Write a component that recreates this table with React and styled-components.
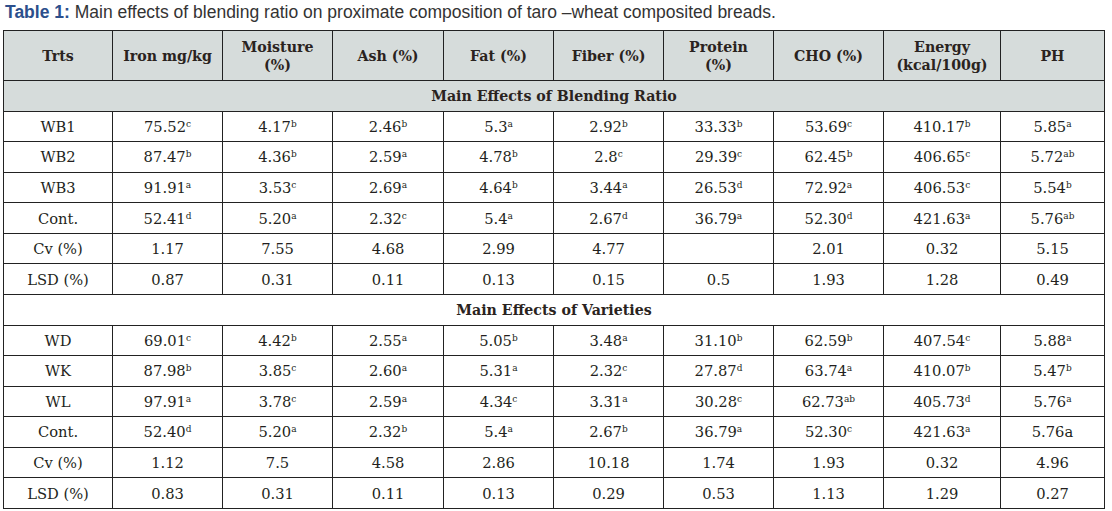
import React from "react";
import styled, { createGlobalStyle } from "styled-components";

const GlobalStyle = createGlobalStyle`
  body {
    margin: 0;
    background: #ffffff;
  }
`;

const Page = styled.div`
  padding: 1px 8px 0 3px;
`;

const Caption = styled.div`
  font-family: "Liberation Sans", Arial, sans-serif;
  font-size: 17.5px;
  color: #333333;
  height: 29px;
  line-height: 22px;
  padding-left: 2px;
`;

const CaptionLabel = styled.b`
  color: #2c4f8c;
`;

const Table = styled.table`
  border-collapse: collapse;
  table-layout: fixed;
  width: 1101px;
  font-family: "DejaVu Serif", "Liberation Serif", serif;
  color: #231f20;
`;

const HeadCell = styled.th`
  background: #d6dcdb;
  border: 1px solid #222222;
  font-size: 14.2px;
  font-weight: bold;
  line-height: 18px;
  height: 49px;
  padding: 0 4px;
  text-align: center;
  color: #2a2320;
`;

const Row = styled.tr`
  height: 30.57px;
`;

const SectionCell = styled.td`
  background: ${(p) => (p.$shaded ? "#d6dcdb" : "#ffffff")};
  border: 1px solid #222222;
  font-size: 14.2px;
  font-weight: bold;
  text-align: center;
  padding: 0;
  color: #2a2320;
`;

const Cell = styled.td`
  border: 1px solid #222222;
  font-size: 14.7px;
  text-align: center;
  padding: 0;
  white-space: nowrap;
`;

const Sup = styled.sup`
  font-size: 9px;
  vertical-align: 5px;
  line-height: 0;
`;

const widths = [109, 110, 110, 111, 110, 110, 110, 110, 117, 104];

const headers = [
  ["Trts"],
  ["Iron mg/kg"],
  ["Moisture", "(%)"],
  ["Ash (%)"],
  ["Fat (%)"],
  ["Fiber (%)"],
  ["Protein", "(%)"],
  ["CHO (%)"],
  ["Energy", "(kcal/100g)"],
  ["PH"],
];

const sections = [
  {
    title: "Main Effects of Blending Ratio",
    shaded: true,
    rows: [
      ["WB1", "75.52^c", "4.17^b", "2.46^b", "5.3^a", "2.92^b", "33.33^b", "53.69^c", "410.17^b", "5.85^a"],
      ["WB2", "87.47^b", "4.36^b", "2.59^a", "4.78^b", "2.8^c", "29.39^c", "62.45^b", "406.65^c", "5.72^ab"],
      ["WB3", "91.91^a", "3.53^c", "2.69^a", "4.64^b", "3.44^a", "26.53^d", "72.92^a", "406.53^c", "5.54^b"],
      ["Cont.", "52.41^d", "5.20^a", "2.32^c", "5.4^a", "2.67^d", "36.79^a", "52.30^d", "421.63^a", "5.76^ab"],
      ["Cv (%)", "1.17", "7.55", "4.68", "2.99", "4.77", "", "2.01", "0.32", "5.15"],
      ["LSD (%)", "0.87", "0.31", "0.11", "0.13", "0.15", "0.5", "1.93", "1.28", "0.49"],
    ],
  },
  {
    title: "Main Effects of Varieties",
    shaded: false,
    rows: [
      ["WD", "69.01^c", "4.42^b", "2.55^a", "5.05^b", "3.48^a", "31.10^b", "62.59^b", "407.54^c", "5.88^a"],
      ["WK", "87.98^b", "3.85^c", "2.60^a", "5.31^a", "2.32^c", "27.87^d", "63.74^a", "410.07^b", "5.47^b"],
      ["WL", "97.91^a", "3.78^c", "2.59^a", "4.34^c", "3.31^a", "30.28^c", "62.73^ab", "405.73^d", "5.76^a"],
      ["Cont.", "52.40^d", "5.20^a", "2.32^b", "5.4^a", "2.67^b", "36.79^a", "52.30^c", "421.63^a", "5.76a"],
      ["Cv (%)", "1.12", "7.5", "4.58", "2.86", "10.18", "1.74", "1.93", "0.32", "4.96"],
      ["LSD (%)", "0.83", "0.31", "0.11", "0.13", "0.29", "0.53", "1.13", "1.29", "0.27"],
    ],
  },
];

function Value({ text }) {
  const [base, sup] = text.split("^");
  return (
    <>
      {base}
      {sup ? <Sup>{sup}</Sup> : null}
    </>
  );
}

export default function App() {
  return (
    <Page>
      <GlobalStyle />
      <Caption>
        <CaptionLabel>Table 1:</CaptionLabel> Main effects of blending ratio on proximate composition of taro –wheat composited breads.
      </Caption>
      <Table>
        <colgroup>
          {widths.map((w, i) => (
            <col key={i} style={{ width: w }} />
          ))}
        </colgroup>
        <thead>
          <tr>
            {headers.map((lines, i) => (
              <HeadCell key={i}>
                {lines.map((l, j) => (
                  <React.Fragment key={j}>
                    {j > 0 && <br />}
                    {l}
                  </React.Fragment>
                ))}
              </HeadCell>
            ))}
          </tr>
        </thead>
        <tbody>
          {sections.map((s) => (
            <React.Fragment key={s.title}>
              <Row>
                <SectionCell colSpan={10} $shaded={s.shaded}>
                  {s.title}
                </SectionCell>
              </Row>
              {s.rows.map((r, i) => (
                <Row key={i}>
                  {r.map((v, j) => (
                    <Cell key={j}>
                      <Value text={v} />
                    </Cell>
                  ))}
                </Row>
              ))}
            </React.Fragment>
          ))}
        </tbody>
      </Table>
    </Page>
  );
}
